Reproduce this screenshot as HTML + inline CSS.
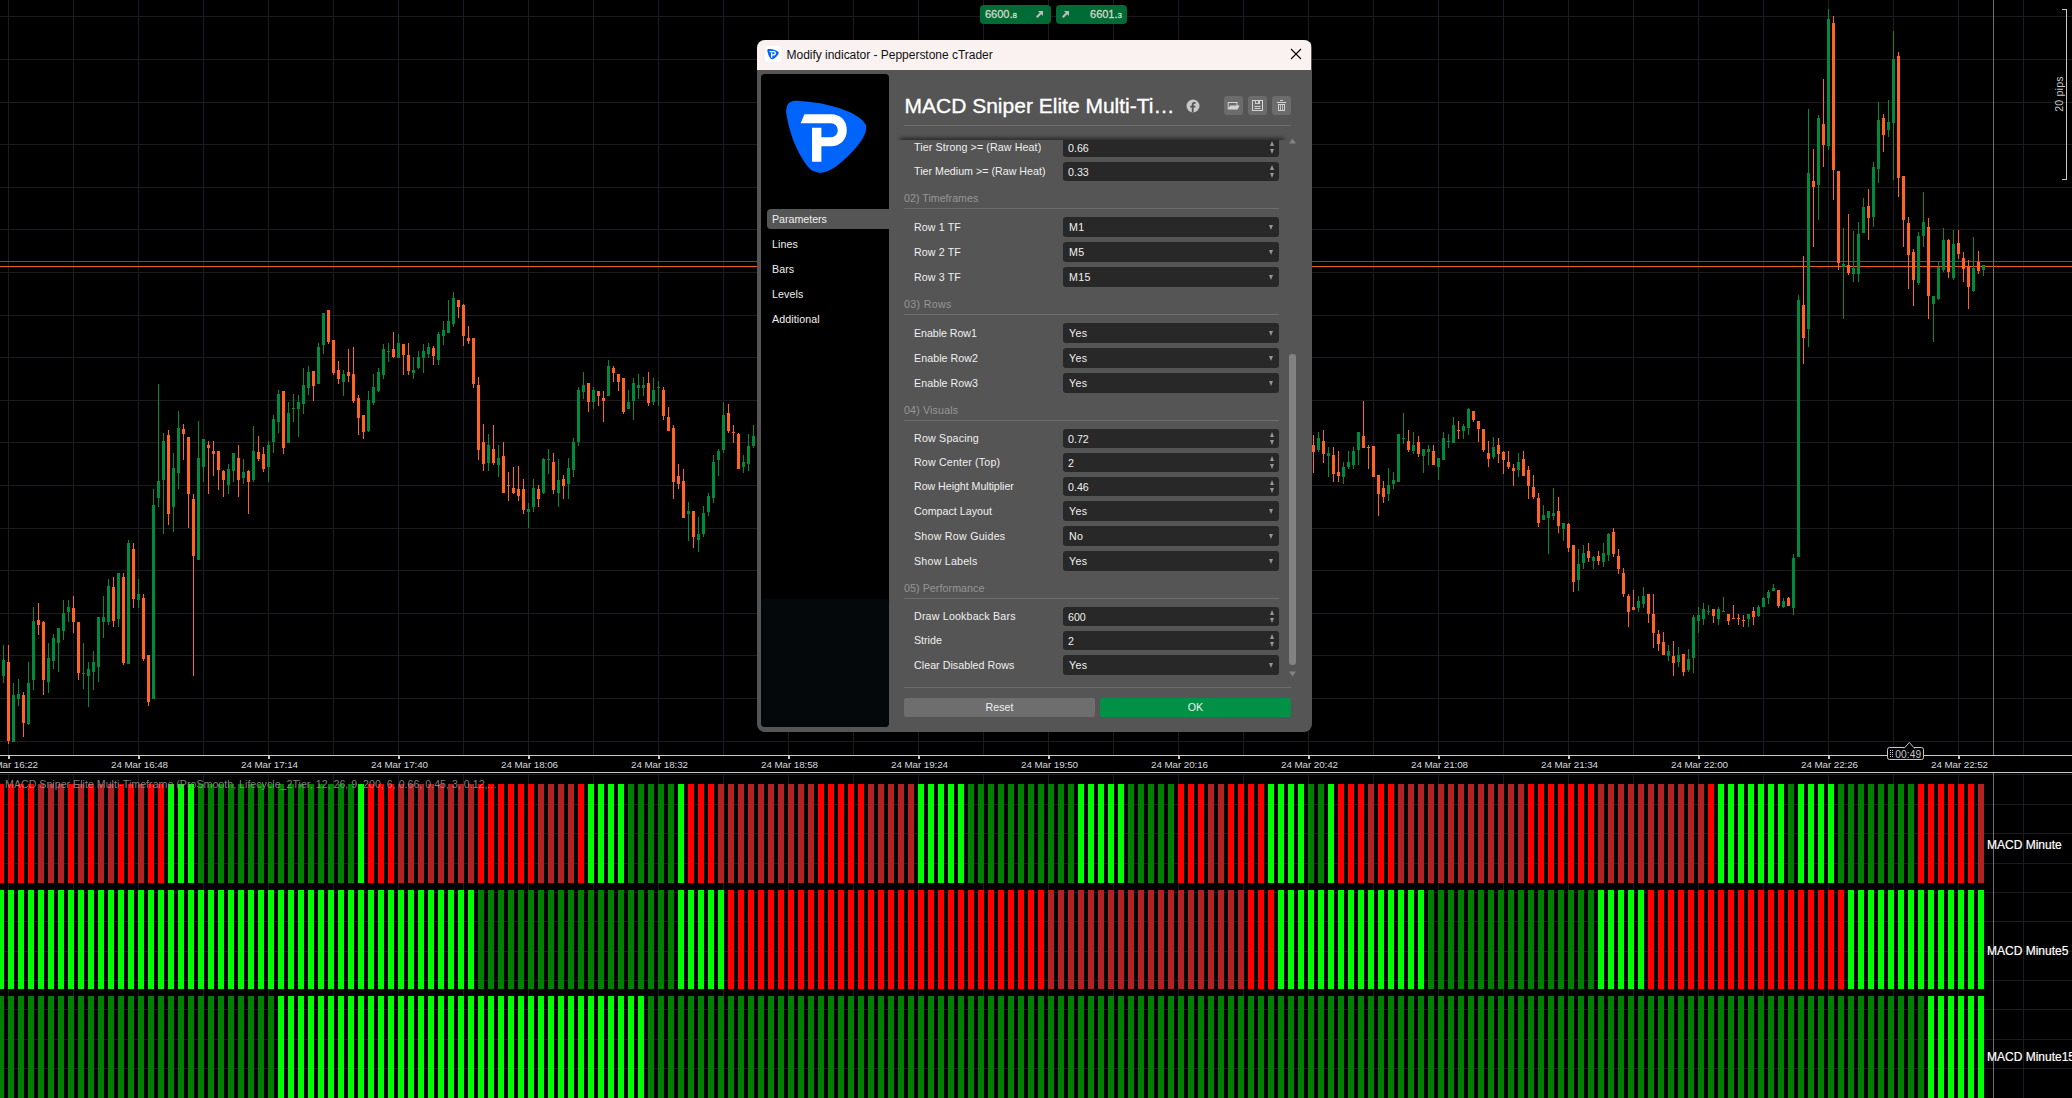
<!DOCTYPE html>
<html lang="en"><head><meta charset="utf-8"><title>Modify indicator - Pepperstone cTrader</title>
<style>
html,body{margin:0;padding:0;background:#000}
body{width:2072px;height:1098px;position:relative;overflow:hidden;font-family:"Liberation Sans",sans-serif;color:#f0f0f0}
.chart{position:absolute;left:0;top:0;display:block}
.tl{position:absolute;top:758px;width:80px;text-align:center;font-size:9.9px;letter-spacing:-.11px;line-height:13px;color:#d2d8de;white-space:nowrap}
.indt{position:absolute;left:5px;top:778px;font-size:10.67px;line-height:13px;color:rgba(150,150,150,.85);white-space:nowrap}
.rl{position:absolute;left:1987px;font-size:12px;line-height:14px;color:#fff;white-space:nowrap;-webkit-text-stroke:.2px #fff}
.pips{position:absolute;left:2009px;top:88px;width:100px;height:12px;line-height:12px;text-align:center;font-size:10.67px;color:#c8c8c8;transform:rotate(-90deg);white-space:nowrap;letter-spacing:.15px}
.qb{position:absolute;top:5px;height:19px;width:71px;background:#006b35;border-radius:4px;color:#d6d6c4;font-size:11px;line-height:19px;-webkit-text-stroke:.3px #d6d6c4}
.qb small{font-size:8px}
.tbox{position:absolute;left:1887px;top:747px;width:35px;height:11px;border:1px solid #c8c8c8;border-radius:2.5px;background:#000;font-size:10.2px;line-height:11px;color:#c3c9cf;white-space:nowrap}
.dlg{position:absolute;left:757px;top:40px;width:555px;height:692px;background:#555;border-radius:8px;overflow:hidden}
.tb{position:absolute;left:0;top:0;width:554px;height:30px;background:#faf1f1;color:#000}
.tbt{position:absolute;left:29.5px;top:7px;font-size:12px;letter-spacing:-.02px;line-height:16px;white-space:nowrap;color:#111}
.side{position:absolute;left:4px;top:34px;width:128px;height:653px;background:#000;border-radius:4px;overflow:hidden}
.side2{position:absolute;left:0;top:525px;width:128px;height:128px;background:#04080a;border-radius:4px}
.mi{position:absolute;left:11px;letter-spacing:.08px;font-size:10.67px;line-height:13px;white-space:nowrap}
.sel{position:absolute;left:6px;top:135px;width:122px;height:20px;background:#555;border-radius:4px 0 0 4px}
.hd{position:absolute;left:147.5px;top:53px;font-size:21px;line-height:26px;white-space:nowrap;color:#fff;-webkit-text-stroke:.35px #fff}
.hl{position:absolute;left:147px;top:85px;width:387px;height:1px;background:#6e6e6e}
.ib{position:absolute;top:56px;width:19px;height:19px;background:#6c6c6c;border-radius:3px}
.lab{position:absolute;left:157px;font-size:10.67px;white-space:nowrap}
.inp{position:absolute;left:306px;width:216px;background:#282828;border-radius:3px;font-size:10.67px}
.v{position:absolute;left:5px;top:0}
.vd{left:6px;letter-spacing:.3px}
.up,.dn,.dd{position:absolute;width:0;height:0;border-left:2.7px solid transparent;border-right:2.7px solid transparent}
.up{left:206.8px;top:3px;border-bottom:5px solid #969696}
.dn{left:206.8px;top:11px;border-top:5px solid #969696}
.dd{left:205.8px;top:8px;border-top:5px solid #969696}
.sec{position:absolute;left:147px;font-size:10.67px;line-height:14px;color:#969696;white-space:nowrap}
.secl{position:absolute;left:147px;width:375px;height:1px;background:#6e6e6e}
.shadow{position:absolute;left:133px;top:88px;width:410px;height:12px;overflow:hidden}.shadow i{position:absolute;left:11px;top:12px;width:382px;height:6px;box-shadow:0 -1px 4px 1px rgba(0,0,0,.55)}
.sbt{position:absolute;left:532px;top:314px;width:7px;height:311px;background:#828282;border-radius:3px}
.btn{position:absolute;top:658px;height:19px;width:191px;border-radius:2px;text-align:center;font-size:10.67px;line-height:19px}
</style></head>
<body>
<svg class="chart" width="2072" height="1098" viewBox="0 0 2072 1098" shape-rendering="crispEdges"><path fill="#1b1b21" d="M8 0h1v755h-1zM8 774h1v324h-1zM73 0h1v755h-1zM73 774h1v324h-1zM138 0h1v755h-1zM138 774h1v324h-1zM203 0h1v755h-1zM203 774h1v324h-1zM268 0h1v755h-1zM268 774h1v324h-1zM333 0h1v755h-1zM333 774h1v324h-1zM398 0h1v755h-1zM398 774h1v324h-1zM463 0h1v755h-1zM463 774h1v324h-1zM528 0h1v755h-1zM528 774h1v324h-1zM593 0h1v755h-1zM593 774h1v324h-1zM658 0h1v755h-1zM658 774h1v324h-1zM723 0h1v755h-1zM723 774h1v324h-1zM788 0h1v755h-1zM788 774h1v324h-1zM853 0h1v755h-1zM853 774h1v324h-1zM918 0h1v755h-1zM918 774h1v324h-1zM983 0h1v755h-1zM983 774h1v324h-1zM1048 0h1v755h-1zM1048 774h1v324h-1zM1113 0h1v755h-1zM1113 774h1v324h-1zM1178 0h1v755h-1zM1178 774h1v324h-1zM1243 0h1v755h-1zM1243 774h1v324h-1zM1308 0h1v755h-1zM1308 774h1v324h-1zM1373 0h1v755h-1zM1373 774h1v324h-1zM1438 0h1v755h-1zM1438 774h1v324h-1zM1503 0h1v755h-1zM1503 774h1v324h-1zM1568 0h1v755h-1zM1568 774h1v324h-1zM1633 0h1v755h-1zM1633 774h1v324h-1zM1698 0h1v755h-1zM1698 774h1v324h-1zM1763 0h1v755h-1zM1763 774h1v324h-1zM1828 0h1v755h-1zM1828 774h1v324h-1zM1893 0h1v755h-1zM1893 774h1v324h-1zM1958 0h1v755h-1zM1958 774h1v324h-1zM2023 0h1v755h-1zM2023 774h1v324h-1zM0 16h2072v1h-2072zM0 59h2072v1h-2072zM0 102h2072v1h-2072zM0 144h2072v1h-2072zM0 187h2072v1h-2072zM0 229h2072v1h-2072zM0 272h2072v1h-2072zM0 315h2072v1h-2072zM0 357h2072v1h-2072zM0 400h2072v1h-2072zM0 442h2072v1h-2072zM0 485h2072v1h-2072zM0 528h2072v1h-2072zM0 570h2072v1h-2072zM0 613h2072v1h-2072zM0 655h2072v1h-2072zM0 698h2072v1h-2072zM0 741h2072v1h-2072zM0 774h2072v1h-2072zM0 804h2072v1h-2072zM0 833h2072v1h-2072zM0 863h2072v1h-2072zM0 892h2072v1h-2072zM0 921h2072v1h-2072zM0 951h2072v1h-2072zM0 980h2072v1h-2072zM0 1009h2072v1h-2072zM0 1039h2072v1h-2072zM0 1068h2072v1h-2072z"/><rect x="0" y="261" width="2072" height="1" fill="#00823c"/><rect x="0" y="266" width="2072" height="1" fill="#ea5b24"/><rect x="1993" y="0" width="1" height="755" fill="#6e6e6e"/><rect x="1993" y="773" width="1" height="325" fill="#6e6e6e"/><path fill="#008a3c" d="M2 660h3v16h-3zM3 645h1v15h-1zM3 676h1v7h-1zM12 695h3v47h-3zM13 683h1v12h-1zM17 694h3v5h-3zM18 679h1v15h-1zM18 699h1v7h-1zM27 683h3v41h-3zM28 662h1v21h-1zM28 724h1v1h-1zM32 621h3v59h-3zM33 607h1v14h-1zM33 680h1v10h-1zM47 658h3v24h-3zM48 643h1v15h-1zM48 682h1v11h-1zM52 638h3v23h-3zM53 634h1v4h-1zM53 661h1v8h-1zM57 628h3v15h-3zM58 643h1v29h-1zM62 613h3v18h-3zM63 600h1v13h-1zM63 631h1v9h-1zM67 607h3v5h-3zM68 600h1v7h-1zM68 612h1v10h-1zM82 673h3v1h-3zM83 643h1v30h-1zM83 674h1v15h-1zM87 669h3v7h-3zM88 662h1v7h-1zM88 676h1v31h-1zM92 662h3v10h-3zM93 651h1v11h-1zM93 672h1v18h-1zM97 617h3v50h-3zM98 667h1v15h-1zM102 617h3v5h-3zM103 596h1v21h-1zM103 622h1v16h-1zM107 586h3v36h-3zM108 579h1v7h-1zM108 622h1v3h-1zM117 573h3v46h-3zM118 619h1v8h-1zM127 543h3v121h-3zM128 540h1v3h-1zM137 594h3v6h-3zM138 579h1v15h-1zM138 600h1v8h-1zM152 505h3v194h-3zM153 489h1v16h-1zM157 481h3v17h-3zM158 384h1v97h-1zM158 498h1v9h-1zM162 441h3v39h-3zM163 433h1v8h-1zM163 480h1v54h-1zM172 468h3v39h-3zM173 453h1v15h-1zM173 507h1v25h-1zM177 428h3v45h-3zM178 411h1v17h-1zM178 473h1v16h-1zM197 458h3v102h-3zM198 421h1v37h-1zM202 439h3v28h-3zM203 467h1v15h-1zM227 469h3v16h-3zM228 464h1v5h-1zM228 485h1v9h-1zM232 453h3v18h-3zM233 471h1v11h-1zM242 472h3v6h-3zM243 459h1v13h-1zM243 478h1v6h-1zM252 451h3v29h-3zM253 426h1v25h-1zM253 480h1v2h-1zM267 445h3v22h-3zM268 441h1v4h-1zM268 467h1v15h-1zM272 419h3v23h-3zM273 415h1v4h-1zM273 442h1v11h-1zM277 394h3v28h-3zM278 390h1v4h-1zM278 422h1v11h-1zM287 413h3v30h-3zM288 402h1v11h-1zM292 408h3v1h-3zM293 394h1v14h-1zM293 409h1v13h-1zM297 402h3v7h-3zM298 395h1v7h-1zM298 409h1v28h-1zM302 385h3v19h-3zM303 368h1v17h-1zM303 404h1v10h-1zM307 372h3v16h-3zM308 366h1v6h-1zM308 388h1v7h-1zM317 347h3v37h-3zM318 343h1v4h-1zM322 313h3v32h-3zM323 345h1v9h-1zM342 374h3v8h-3zM343 370h1v4h-1zM343 382h1v14h-1zM367 400h3v31h-3zM368 391h1v9h-1zM368 431h1v1h-1zM372 387h3v16h-3zM373 374h1v13h-1zM373 403h1v2h-1zM377 372h3v19h-3zM378 368h1v4h-1zM378 391h1v1h-1zM382 349h3v26h-3zM383 344h1v5h-1zM383 375h1v4h-1zM387 351h3v1h-3zM388 343h1v8h-1zM388 352h1v10h-1zM397 343h3v15h-3zM398 334h1v9h-1zM412 370h3v3h-3zM413 357h1v13h-1zM413 373h1v6h-1zM417 357h3v11h-3zM418 351h1v6h-1zM418 368h1v1h-1zM422 351h3v7h-3zM423 344h1v7h-1zM423 358h1v15h-1zM427 347h3v7h-3zM428 343h1v4h-1zM428 354h1v4h-1zM437 334h3v26h-3zM438 332h1v2h-1zM438 360h1v5h-1zM442 330h3v6h-3zM443 321h1v9h-1zM443 336h1v9h-1zM447 321h3v12h-3zM448 300h1v21h-1zM452 298h3v26h-3zM453 292h1v6h-1zM453 324h1v3h-1zM487 445h3v18h-3zM488 434h1v11h-1zM488 463h1v8h-1zM497 458h3v7h-3zM498 445h1v13h-1zM498 465h1v12h-1zM527 509h3v3h-3zM528 503h1v6h-1zM528 512h1v16h-1zM532 488h3v19h-3zM533 479h1v9h-1zM533 507h1v5h-1zM542 459h3v34h-3zM543 458h1v1h-1zM543 493h1v1h-1zM547 459h3v1h-3zM548 449h1v10h-1zM548 460h1v14h-1zM557 480h3v13h-3zM558 459h1v21h-1zM558 493h1v14h-1zM567 468h3v16h-3zM568 458h1v10h-1zM568 484h1v15h-1zM572 442h3v28h-3zM573 438h1v4h-1zM573 470h1v7h-1zM577 390h3v52h-3zM578 387h1v3h-1zM578 442h1v4h-1zM582 385h3v7h-3zM583 372h1v13h-1zM583 392h1v7h-1zM592 390h3v12h-3zM593 387h1v3h-1zM593 402h1v7h-1zM607 366h3v30h-3zM608 360h1v6h-1zM627 402h3v7h-3zM628 390h1v12h-1zM632 383h3v18h-3zM633 378h1v5h-1zM633 401h1v19h-1zM637 385h3v3h-3zM638 374h1v11h-1zM638 388h1v11h-1zM642 385h3v3h-3zM643 377h1v8h-1zM643 388h1v8h-1zM652 390h3v12h-3zM653 378h1v12h-1zM653 402h1v3h-1zM657 387h3v1h-3zM658 381h1v6h-1zM658 388h1v18h-1zM687 511h3v3h-3zM688 502h1v9h-1zM688 514h1v27h-1zM697 534h3v6h-3zM698 517h1v17h-1zM698 540h1v12h-1zM702 513h3v21h-3zM703 506h1v7h-1zM703 534h1v3h-1zM707 496h3v16h-3zM708 493h1v3h-1zM708 512h1v4h-1zM712 462h3v36h-3zM713 455h1v7h-1zM713 498h1v5h-1zM717 451h3v9h-3zM718 449h1v2h-1zM718 460h1v16h-1zM722 415h3v35h-3zM723 402h1v13h-1zM723 450h1v3h-1zM742 462h3v5h-3zM743 455h1v7h-1zM743 467h1v6h-1zM747 446h3v18h-3zM748 434h1v12h-1zM748 464h1v7h-1zM752 436h3v10h-3zM753 425h1v11h-1zM753 446h1v2h-1zM1317 438h3v12h-3zM1318 432h1v6h-1zM1318 450h1v2h-1zM1327 453h3v3h-3zM1328 447h1v6h-1zM1328 456h1v21h-1zM1342 467h3v10h-3zM1343 462h1v5h-1zM1343 477h1v7h-1zM1347 462h3v5h-3zM1348 451h1v11h-1zM1348 467h1v2h-1zM1352 451h3v14h-3zM1353 447h1v4h-1zM1353 465h1v4h-1zM1357 432h3v18h-3zM1358 450h1v15h-1zM1387 485h3v9h-3zM1388 468h1v17h-1zM1388 494h1v7h-1zM1392 480h3v4h-3zM1393 472h1v8h-1zM1393 484h1v5h-1zM1397 434h3v48h-3zM1402 438h3v1h-3zM1403 413h1v25h-1zM1403 439h1v5h-1zM1412 445h3v6h-3zM1413 432h1v13h-1zM1413 451h1v3h-1zM1422 449h3v7h-3zM1423 456h1v17h-1zM1427 449h3v3h-3zM1428 445h1v4h-1zM1428 452h1v13h-1zM1437 458h3v9h-3zM1438 467h1v13h-1zM1442 438h3v22h-3zM1443 432h1v6h-1zM1447 441h3v1h-3zM1448 434h1v7h-1zM1448 442h1v6h-1zM1452 425h3v18h-3zM1453 417h1v8h-1zM1462 426h3v5h-3zM1463 424h1v2h-1zM1463 431h1v8h-1zM1467 409h3v19h-3zM1468 408h1v1h-1zM1468 428h1v7h-1zM1492 447h3v10h-3zM1493 437h1v10h-1zM1493 457h1v2h-1zM1517 462h3v8h-3zM1518 453h1v9h-1zM1518 470h1v7h-1zM1542 515h3v5h-3zM1543 505h1v10h-1zM1547 511h3v7h-3zM1548 518h1v36h-1zM1552 513h3v3h-3zM1553 488h1v25h-1zM1553 516h1v4h-1zM1562 523h3v6h-3zM1563 529h1v12h-1zM1577 564h3v16h-3zM1578 549h1v15h-1zM1578 580h1v11h-1zM1582 553h3v10h-3zM1583 545h1v8h-1zM1583 563h1v6h-1zM1592 557h3v4h-3zM1593 556h1v1h-1zM1593 561h1v8h-1zM1602 553h3v9h-3zM1603 543h1v10h-1zM1603 562h1v5h-1zM1607 534h3v21h-3zM1608 533h1v1h-1zM1608 555h1v6h-1zM1637 601h3v7h-3zM1638 596h1v5h-1zM1638 608h1v4h-1zM1642 596h3v8h-3zM1643 587h1v9h-1zM1643 604h1v4h-1zM1667 651h3v5h-3zM1668 645h1v6h-1zM1668 656h1v5h-1zM1677 655h3v7h-3zM1678 647h1v8h-1zM1678 662h1v5h-1zM1687 659h3v11h-3zM1688 649h1v10h-1zM1688 670h1v2h-1zM1692 617h3v41h-3zM1693 615h1v2h-1zM1693 658h1v15h-1zM1697 615h3v6h-3zM1698 607h1v8h-1zM1698 621h1v12h-1zM1702 609h3v10h-3zM1703 603h1v6h-1zM1703 619h1v6h-1zM1707 611h3v1h-3zM1708 605h1v6h-1zM1708 612h1v3h-1zM1717 609h3v10h-3zM1718 607h1v2h-1zM1718 619h1v6h-1zM1722 611h3v1h-3zM1723 597h1v14h-1zM1747 614h3v5h-3zM1748 619h1v8h-1zM1757 607h3v9h-3zM1758 605h1v2h-1zM1758 616h1v1h-1zM1762 598h3v9h-3zM1763 597h1v1h-1zM1767 592h3v6h-3zM1768 590h1v2h-1zM1768 598h1v6h-1zM1772 588h3v3h-3zM1773 584h1v4h-1zM1782 601h3v6h-3zM1783 598h1v3h-1zM1783 607h1v1h-1zM1792 558h3v50h-3zM1793 554h1v4h-1zM1793 608h1v7h-1zM1797 300h3v257h-3zM1798 295h1v5h-1zM1807 173h3v156h-3zM1808 109h1v64h-1zM1808 329h1v18h-1zM1817 118h3v67h-3zM1818 115h1v3h-1zM1818 185h1v35h-1zM1827 19h3v127h-3zM1828 9h1v10h-1zM1828 146h1v4h-1zM1842 264h3v3h-3zM1843 228h1v36h-1zM1843 267h1v52h-1zM1852 268h3v6h-3zM1853 231h1v37h-1zM1853 274h1v8h-1zM1857 234h3v40h-3zM1858 222h1v12h-1zM1858 274h1v8h-1zM1862 207h3v26h-3zM1863 198h1v9h-1zM1872 167h3v50h-3zM1873 162h1v5h-1zM1873 217h1v10h-1zM1877 120h3v49h-3zM1878 102h1v18h-1zM1878 169h1v14h-1zM1887 122h3v8h-3zM1888 100h1v22h-1zM1888 130h1v7h-1zM1892 59h3v64h-3zM1893 31h1v28h-1zM1893 123h1v57h-1zM1917 236h3v47h-3zM1918 232h1v4h-1zM1918 283h1v2h-1zM1922 222h3v14h-3zM1923 192h1v30h-1zM1923 236h1v11h-1zM1932 296h3v8h-3zM1933 304h1v38h-1zM1937 267h3v32h-3zM1938 262h1v5h-1zM1938 299h1v1h-1zM1942 240h3v30h-3zM1943 228h1v12h-1zM1943 270h1v2h-1zM1952 244h3v34h-3zM1953 230h1v14h-1zM1953 278h1v2h-1zM1972 268h3v23h-3zM1973 237h1v31h-1zM1973 291h1v1h-1zM1982 265h3v5h-3zM1983 270h1v6h-1z"/><path fill="#ff6423" d="M7 662h3v79h-3zM8 645h1v17h-1zM8 741h1v3h-1zM22 695h3v28h-3zM23 692h1v3h-1zM23 723h1v14h-1zM37 620h3v5h-3zM38 603h1v17h-1zM38 625h1v10h-1zM42 622h3v58h-3zM43 621h1v1h-1zM43 680h1v15h-1zM72 608h3v14h-3zM73 596h1v12h-1zM73 622h1v11h-1zM77 622h3v51h-3zM78 673h1v7h-1zM112 587h3v34h-3zM113 577h1v10h-1zM113 621h1v6h-1zM122 577h3v86h-3zM123 573h1v4h-1zM123 663h1v2h-1zM132 549h3v50h-3zM133 543h1v6h-1zM133 599h1v9h-1zM142 598h3v61h-3zM143 594h1v4h-1zM143 659h1v2h-1zM147 655h3v47h-3zM148 702h1v4h-1zM167 435h3v79h-3zM168 430h1v5h-1zM168 514h1v11h-1zM182 429h3v5h-3zM183 424h1v5h-1zM183 434h1v26h-1zM187 437h3v57h-3zM188 494h1v34h-1zM192 499h3v57h-3zM193 494h1v5h-1zM193 556h1v120h-1zM207 445h3v3h-3zM208 441h1v4h-1zM208 448h1v46h-1zM212 451h3v3h-3zM213 441h1v10h-1zM213 454h1v22h-1zM217 451h3v19h-3zM218 470h1v20h-1zM222 471h3v9h-3zM223 470h1v1h-1zM223 480h1v17h-1zM237 458h3v22h-3zM238 445h1v13h-1zM238 480h1v17h-1zM247 471h3v11h-3zM248 470h1v1h-1zM248 482h1v32h-1zM257 452h3v7h-3zM258 436h1v16h-1zM258 459h1v2h-1zM262 454h3v15h-3zM263 447h1v7h-1zM263 469h1v3h-1zM282 391h3v57h-3zM283 448h1v6h-1zM312 371h3v15h-3zM313 386h1v15h-1zM327 310h3v32h-3zM328 342h1v2h-1zM332 340h3v33h-3zM333 373h1v2h-1zM337 370h3v9h-3zM338 361h1v9h-1zM338 379h1v5h-1zM347 372h3v4h-3zM348 349h1v23h-1zM348 376h1v6h-1zM352 374h3v27h-3zM353 347h1v27h-1zM353 401h1v2h-1zM357 398h3v20h-3zM358 395h1v3h-1zM358 418h1v17h-1zM362 415h3v17h-3zM363 432h1v7h-1zM392 349h3v8h-3zM393 332h1v17h-1zM393 357h1v1h-1zM402 344h3v11h-3zM403 355h1v20h-1zM407 355h3v16h-3zM408 343h1v12h-1zM408 371h1v4h-1zM432 348h3v8h-3zM433 346h1v2h-1zM433 356h1v9h-1zM457 300h3v7h-3zM458 307h1v11h-1zM462 305h3v31h-3zM463 304h1v1h-1zM463 336h1v10h-1zM467 338h3v3h-3zM468 326h1v12h-1zM468 341h1v3h-1zM472 338h3v46h-3zM473 384h1v4h-1zM477 385h3v65h-3zM478 377h1v8h-1zM478 450h1v10h-1zM482 442h3v22h-3zM483 424h1v18h-1zM483 464h1v7h-1zM492 449h3v14h-3zM493 425h1v24h-1zM493 463h1v2h-1zM502 456h3v37h-3zM503 442h1v14h-1zM507 485h3v1h-3zM508 472h1v13h-1zM508 486h1v15h-1zM512 488h3v5h-3zM513 467h1v21h-1zM513 493h1v1h-1zM517 489h3v7h-3zM518 466h1v23h-1zM518 496h1v5h-1zM522 489h3v21h-3zM523 479h1v10h-1zM523 510h1v4h-1zM537 489h3v10h-3zM538 485h1v4h-1zM538 499h1v8h-1zM552 462h3v28h-3zM553 453h1v9h-1zM553 490h1v4h-1zM562 479h3v7h-3zM563 475h1v4h-1zM563 486h1v13h-1zM587 383h3v19h-3zM588 402h1v10h-1zM597 391h3v5h-3zM598 396h1v10h-1zM602 398h3v3h-3zM603 391h1v7h-1zM603 401h1v21h-1zM612 368h3v5h-3zM613 366h1v2h-1zM613 373h1v9h-1zM617 374h3v8h-3zM618 382h1v9h-1zM622 378h3v34h-3zM623 412h1v2h-1zM647 383h3v20h-3zM648 372h1v11h-1zM648 403h1v3h-1zM662 390h3v26h-3zM663 387h1v3h-1zM663 416h1v4h-1zM667 417h3v14h-3zM668 407h1v10h-1zM672 428h3v54h-3zM673 425h1v3h-1zM673 482h1v17h-1zM677 476h3v8h-3zM678 464h1v12h-1zM678 484h1v5h-1zM682 481h3v37h-3zM683 469h1v12h-1zM692 511h3v26h-3zM693 537h1v11h-1zM727 413h3v18h-3zM728 404h1v9h-1zM728 431h1v2h-1zM732 432h3v1h-3zM733 425h1v7h-1zM733 433h1v10h-1zM737 434h3v35h-3zM738 433h1v1h-1zM1312 445h3v7h-3zM1313 435h1v10h-1zM1313 452h1v21h-1zM1322 441h3v13h-3zM1323 430h1v11h-1zM1323 454h1v9h-1zM1332 455h3v19h-3zM1333 447h1v8h-1zM1333 474h1v8h-1zM1337 472h3v4h-3zM1338 451h1v21h-1zM1338 476h1v6h-1zM1362 436h3v12h-3zM1363 401h1v35h-1zM1367 447h3v1h-3zM1368 445h1v2h-1zM1368 448h1v21h-1zM1372 446h3v31h-3zM1377 475h3v19h-3zM1378 494h1v22h-1zM1382 488h3v9h-3zM1383 481h1v7h-1zM1383 497h1v6h-1zM1407 441h3v9h-3zM1408 430h1v11h-1zM1408 450h1v2h-1zM1417 442h3v12h-3zM1418 436h1v6h-1zM1418 454h1v3h-1zM1432 451h3v14h-3zM1433 445h1v6h-1zM1457 430h3v1h-3zM1458 421h1v9h-1zM1458 431h1v8h-1zM1472 411h3v9h-3zM1473 420h1v2h-1zM1477 421h3v8h-3zM1478 429h1v13h-1zM1482 429h3v21h-3zM1483 450h1v2h-1zM1487 453h3v6h-3zM1488 441h1v12h-1zM1488 459h1v8h-1zM1497 445h3v9h-3zM1498 438h1v7h-1zM1498 454h1v9h-1zM1502 452h3v8h-3zM1503 451h1v1h-1zM1503 460h1v14h-1zM1507 462h3v5h-3zM1508 451h1v11h-1zM1508 467h1v2h-1zM1512 468h3v3h-3zM1513 464h1v4h-1zM1513 471h1v15h-1zM1522 459h3v17h-3zM1523 451h1v8h-1zM1527 470h3v16h-3zM1528 466h1v4h-1zM1528 486h1v13h-1zM1532 487h3v10h-3zM1533 475h1v12h-1zM1533 497h1v2h-1zM1537 498h3v25h-3zM1538 493h1v5h-1zM1538 523h1v4h-1zM1557 511h3v15h-3zM1558 497h1v14h-1zM1558 526h1v7h-1zM1567 524h3v24h-3zM1568 523h1v1h-1zM1568 548h1v4h-1zM1572 545h3v37h-3zM1573 582h1v10h-1zM1587 551h3v7h-3zM1588 543h1v8h-1zM1588 558h1v4h-1zM1597 556h3v5h-3zM1598 551h1v5h-1zM1598 561h1v4h-1zM1612 532h3v22h-3zM1613 528h1v4h-1zM1613 554h1v3h-1zM1617 556h3v13h-3zM1618 549h1v7h-1zM1618 569h1v5h-1zM1622 573h3v21h-3zM1623 568h1v5h-1zM1623 594h1v3h-1zM1627 596h3v16h-3zM1628 594h1v2h-1zM1628 612h1v15h-1zM1632 607h3v3h-3zM1633 590h1v17h-1zM1647 594h3v20h-3zM1648 614h1v9h-1zM1652 614h3v19h-3zM1653 594h1v20h-1zM1653 633h1v15h-1zM1657 634h3v10h-3zM1658 630h1v4h-1zM1658 644h1v7h-1zM1662 642h3v13h-3zM1663 632h1v10h-1zM1672 656h3v7h-3zM1673 641h1v15h-1zM1673 663h1v13h-1zM1682 654h3v18h-3zM1683 672h1v4h-1zM1712 609h3v7h-3zM1713 616h1v7h-1zM1727 614h3v7h-3zM1728 621h1v4h-1zM1732 618h3v1h-3zM1733 605h1v13h-1zM1737 618h3v1h-3zM1738 614h1v4h-1zM1738 619h1v6h-1zM1742 620h3v1h-3zM1743 615h1v5h-1zM1743 621h1v6h-1zM1752 611h3v6h-3zM1753 607h1v4h-1zM1753 617h1v8h-1zM1777 590h3v16h-3zM1778 606h1v2h-1zM1787 598h3v8h-3zM1788 597h1v1h-1zM1802 305h3v33h-3zM1803 256h1v49h-1zM1803 338h1v26h-1zM1812 181h3v6h-3zM1813 149h1v32h-1zM1813 187h1v60h-1zM1822 124h3v21h-3zM1823 79h1v45h-1zM1823 145h1v22h-1zM1832 23h3v147h-3zM1833 16h1v7h-1zM1833 170h1v30h-1zM1837 171h3v92h-3zM1838 263h1v7h-1zM1847 265h3v8h-3zM1848 214h1v51h-1zM1848 273h1v2h-1zM1867 206h3v12h-3zM1868 189h1v17h-1zM1868 218h1v22h-1zM1882 118h3v17h-3zM1883 114h1v4h-1zM1883 135h1v17h-1zM1897 56h3v122h-3zM1898 52h1v4h-1zM1898 178h1v19h-1zM1902 176h3v44h-3zM1903 220h1v27h-1zM1907 223h3v32h-3zM1908 217h1v6h-1zM1908 255h1v34h-1zM1912 252h3v28h-3zM1913 249h1v3h-1zM1913 280h1v26h-1zM1927 227h3v69h-3zM1928 218h1v9h-1zM1928 296h1v23h-1zM1947 240h3v32h-3zM1948 239h1v1h-1zM1948 272h1v6h-1zM1957 243h3v11h-3zM1958 230h1v13h-1zM1958 254h1v5h-1zM1962 258h3v11h-3zM1963 252h1v6h-1zM1963 269h1v13h-1zM1967 266h3v21h-3zM1968 260h1v6h-1zM1968 287h1v22h-1zM1977 262h3v9h-3zM1978 251h1v11h-1zM1978 271h1v3h-1z"/><rect x="0" y="755" width="2072" height="1" fill="#c8c8c8"/><rect x="0" y="772" width="2072" height="1" fill="#c8c8c8"/><path fill="#c8c8c8" d="M8 755h2v4h-2zM138 755h2v4h-2zM268 755h2v4h-2zM398 755h2v4h-2zM528 755h2v4h-2zM658 755h2v4h-2zM788 755h2v4h-2zM918 755h2v4h-2zM1048 755h2v4h-2zM1178 755h2v4h-2zM1308 755h2v4h-2zM1438 755h2v4h-2zM1568 755h2v4h-2zM1698 755h2v4h-2zM1828 755h2v4h-2zM1958 755h2v4h-2z"/><path fill="#ff0000" d="M-2 784h6v99h-6zM8 784h6v99h-6zM18 784h6v99h-6zM28 784h6v99h-6zM68 784h6v99h-6zM88 784h6v99h-6zM118 784h6v99h-6zM128 784h6v99h-6zM148 784h6v99h-6zM158 784h6v99h-6zM368 784h6v99h-6zM378 784h6v99h-6zM388 784h6v99h-6zM478 784h6v99h-6zM488 784h6v99h-6zM498 784h6v99h-6zM508 784h6v99h-6zM518 784h6v99h-6zM528 784h6v99h-6zM578 784h6v99h-6zM688 784h6v99h-6zM698 784h6v99h-6zM708 784h6v99h-6zM818 784h6v99h-6zM828 784h6v99h-6zM838 784h6v99h-6zM848 784h6v99h-6zM858 784h6v99h-6zM1178 784h6v99h-6zM1188 784h6v99h-6zM1198 784h6v99h-6zM1228 784h6v99h-6zM1238 784h6v99h-6zM1248 784h6v99h-6zM1258 784h6v99h-6zM1338 784h6v99h-6zM1348 784h6v99h-6zM1358 784h6v99h-6zM1378 784h6v99h-6zM1388 784h6v99h-6zM1528 784h6v99h-6zM1538 784h6v99h-6zM1548 784h6v99h-6zM1558 784h6v99h-6zM1568 784h6v99h-6zM1578 784h6v99h-6zM1588 784h6v99h-6zM1708 784h6v99h-6zM1918 784h6v99h-6zM1928 784h6v99h-6zM1938 784h6v99h-6zM1948 784h6v99h-6zM1958 784h6v99h-6zM1968 784h6v99h-6zM728 890h6v99h-6zM738 890h6v99h-6zM748 890h6v99h-6zM758 890h6v99h-6zM768 890h6v99h-6zM778 890h6v99h-6zM788 890h6v99h-6zM798 890h6v99h-6zM808 890h6v99h-6zM818 890h6v99h-6zM828 890h6v99h-6zM838 890h6v99h-6zM848 890h6v99h-6zM858 890h6v99h-6zM868 890h6v99h-6zM878 890h6v99h-6zM888 890h6v99h-6zM898 890h6v99h-6zM908 890h6v99h-6zM918 890h6v99h-6zM928 890h6v99h-6zM938 890h6v99h-6zM948 890h6v99h-6zM958 890h6v99h-6zM968 890h6v99h-6zM978 890h6v99h-6zM988 890h6v99h-6zM998 890h6v99h-6zM1008 890h6v99h-6zM1018 890h6v99h-6zM1028 890h6v99h-6zM1038 890h6v99h-6zM1248 890h6v99h-6zM1258 890h6v99h-6zM1268 890h6v99h-6zM1648 890h6v99h-6zM1658 890h6v99h-6zM1668 890h6v99h-6zM1678 890h6v99h-6zM1688 890h6v99h-6zM1698 890h6v99h-6zM1708 890h6v99h-6zM1718 890h6v99h-6zM1728 890h6v99h-6zM1738 890h6v99h-6zM1748 890h6v99h-6zM1758 890h6v99h-6zM1768 890h6v99h-6zM1778 890h6v99h-6zM1788 890h6v99h-6zM1798 890h6v99h-6zM1808 890h6v99h-6zM1818 890h6v99h-6zM1828 890h6v99h-6zM1838 890h6v99h-6z"/><path fill="#b22222" d="M38 784h6v99h-6zM48 784h6v99h-6zM58 784h6v99h-6zM78 784h6v99h-6zM98 784h6v99h-6zM108 784h6v99h-6zM138 784h6v99h-6zM398 784h6v99h-6zM408 784h6v99h-6zM418 784h6v99h-6zM428 784h6v99h-6zM438 784h6v99h-6zM448 784h6v99h-6zM458 784h6v99h-6zM468 784h6v99h-6zM538 784h6v99h-6zM548 784h6v99h-6zM558 784h6v99h-6zM568 784h6v99h-6zM718 784h6v99h-6zM728 784h6v99h-6zM738 784h6v99h-6zM748 784h6v99h-6zM758 784h6v99h-6zM768 784h6v99h-6zM778 784h6v99h-6zM788 784h6v99h-6zM798 784h6v99h-6zM808 784h6v99h-6zM868 784h6v99h-6zM878 784h6v99h-6zM888 784h6v99h-6zM898 784h6v99h-6zM908 784h6v99h-6zM1208 784h6v99h-6zM1218 784h6v99h-6zM1368 784h6v99h-6zM1398 784h6v99h-6zM1408 784h6v99h-6zM1418 784h6v99h-6zM1428 784h6v99h-6zM1438 784h6v99h-6zM1448 784h6v99h-6zM1458 784h6v99h-6zM1468 784h6v99h-6zM1478 784h6v99h-6zM1488 784h6v99h-6zM1498 784h6v99h-6zM1508 784h6v99h-6zM1518 784h6v99h-6zM1598 784h6v99h-6zM1608 784h6v99h-6zM1618 784h6v99h-6zM1628 784h6v99h-6zM1638 784h6v99h-6zM1648 784h6v99h-6zM1658 784h6v99h-6zM1668 784h6v99h-6zM1678 784h6v99h-6zM1688 784h6v99h-6zM1698 784h6v99h-6zM1978 784h6v99h-6zM1048 890h6v99h-6zM1058 890h6v99h-6zM1068 890h6v99h-6zM1078 890h6v99h-6zM1088 890h6v99h-6zM1098 890h6v99h-6zM1108 890h6v99h-6zM1118 890h6v99h-6zM1128 890h6v99h-6zM1138 890h6v99h-6zM1148 890h6v99h-6zM1158 890h6v99h-6zM1168 890h6v99h-6zM1178 890h6v99h-6zM1188 890h6v99h-6zM1198 890h6v99h-6zM1208 890h6v99h-6zM1218 890h6v99h-6zM1228 890h6v99h-6zM1238 890h6v99h-6z"/><path fill="#00ff00" d="M168 784h6v99h-6zM178 784h6v99h-6zM188 784h6v99h-6zM358 784h6v99h-6zM588 784h6v99h-6zM598 784h6v99h-6zM608 784h6v99h-6zM618 784h6v99h-6zM678 784h6v99h-6zM918 784h6v99h-6zM928 784h6v99h-6zM938 784h6v99h-6zM948 784h6v99h-6zM958 784h6v99h-6zM1078 784h6v99h-6zM1088 784h6v99h-6zM1098 784h6v99h-6zM1108 784h6v99h-6zM1118 784h6v99h-6zM1268 784h6v99h-6zM1278 784h6v99h-6zM1288 784h6v99h-6zM1298 784h6v99h-6zM1328 784h6v99h-6zM1718 784h6v99h-6zM1728 784h6v99h-6zM1738 784h6v99h-6zM1748 784h6v99h-6zM1758 784h6v99h-6zM1768 784h6v99h-6zM1778 784h6v99h-6zM1798 784h6v99h-6zM1808 784h6v99h-6zM1818 784h6v99h-6zM1828 784h6v99h-6zM-2 890h6v99h-6zM8 890h6v99h-6zM18 890h6v99h-6zM28 890h6v99h-6zM38 890h6v99h-6zM48 890h6v99h-6zM58 890h6v99h-6zM68 890h6v99h-6zM78 890h6v99h-6zM88 890h6v99h-6zM98 890h6v99h-6zM108 890h6v99h-6zM118 890h6v99h-6zM128 890h6v99h-6zM138 890h6v99h-6zM148 890h6v99h-6zM158 890h6v99h-6zM168 890h6v99h-6zM178 890h6v99h-6zM188 890h6v99h-6zM198 890h6v99h-6zM208 890h6v99h-6zM218 890h6v99h-6zM228 890h6v99h-6zM238 890h6v99h-6zM248 890h6v99h-6zM258 890h6v99h-6zM268 890h6v99h-6zM278 890h6v99h-6zM288 890h6v99h-6zM298 890h6v99h-6zM308 890h6v99h-6zM318 890h6v99h-6zM328 890h6v99h-6zM338 890h6v99h-6zM348 890h6v99h-6zM358 890h6v99h-6zM368 890h6v99h-6zM378 890h6v99h-6zM388 890h6v99h-6zM398 890h6v99h-6zM408 890h6v99h-6zM418 890h6v99h-6zM428 890h6v99h-6zM438 890h6v99h-6zM448 890h6v99h-6zM458 890h6v99h-6zM468 890h6v99h-6zM678 890h6v99h-6zM688 890h6v99h-6zM698 890h6v99h-6zM708 890h6v99h-6zM718 890h6v99h-6zM1278 890h6v99h-6zM1288 890h6v99h-6zM1298 890h6v99h-6zM1308 890h6v99h-6zM1318 890h6v99h-6zM1328 890h6v99h-6zM1338 890h6v99h-6zM1348 890h6v99h-6zM1358 890h6v99h-6zM1368 890h6v99h-6zM1378 890h6v99h-6zM1388 890h6v99h-6zM1398 890h6v99h-6zM1408 890h6v99h-6zM1418 890h6v99h-6zM1598 890h6v99h-6zM1608 890h6v99h-6zM1618 890h6v99h-6zM1628 890h6v99h-6zM1638 890h6v99h-6zM1848 890h6v99h-6zM1858 890h6v99h-6zM1868 890h6v99h-6zM1878 890h6v99h-6zM1888 890h6v99h-6zM1898 890h6v99h-6zM1908 890h6v99h-6zM1918 890h6v99h-6zM1928 890h6v99h-6zM1938 890h6v99h-6zM1948 890h6v99h-6zM1958 890h6v99h-6zM1968 890h6v99h-6zM1978 890h6v99h-6zM278 996h6v102h-6zM288 996h6v102h-6zM298 996h6v102h-6zM308 996h6v102h-6zM318 996h6v102h-6zM328 996h6v102h-6zM338 996h6v102h-6zM348 996h6v102h-6zM358 996h6v102h-6zM368 996h6v102h-6zM378 996h6v102h-6zM388 996h6v102h-6zM398 996h6v102h-6zM408 996h6v102h-6zM418 996h6v102h-6zM428 996h6v102h-6zM438 996h6v102h-6zM448 996h6v102h-6zM458 996h6v102h-6zM468 996h6v102h-6zM478 996h6v102h-6zM488 996h6v102h-6zM498 996h6v102h-6zM508 996h6v102h-6zM518 996h6v102h-6zM528 996h6v102h-6zM538 996h6v102h-6zM548 996h6v102h-6zM558 996h6v102h-6zM568 996h6v102h-6zM578 996h6v102h-6zM588 996h6v102h-6zM598 996h6v102h-6zM608 996h6v102h-6zM618 996h6v102h-6zM628 996h6v102h-6zM638 996h6v102h-6zM1928 996h6v102h-6zM1938 996h6v102h-6zM1948 996h6v102h-6zM1958 996h6v102h-6zM1968 996h6v102h-6zM1978 996h6v102h-6z"/><path fill="#008000" d="M198 784h6v99h-6zM208 784h6v99h-6zM218 784h6v99h-6zM228 784h6v99h-6zM238 784h6v99h-6zM248 784h6v99h-6zM258 784h6v99h-6zM268 784h6v99h-6zM278 784h6v99h-6zM288 784h6v99h-6zM298 784h6v99h-6zM308 784h6v99h-6zM318 784h6v99h-6zM328 784h6v99h-6zM338 784h6v99h-6zM348 784h6v99h-6zM628 784h6v99h-6zM638 784h6v99h-6zM648 784h6v99h-6zM658 784h6v99h-6zM668 784h6v99h-6zM968 784h6v99h-6zM978 784h6v99h-6zM988 784h6v99h-6zM998 784h6v99h-6zM1008 784h6v99h-6zM1018 784h6v99h-6zM1028 784h6v99h-6zM1038 784h6v99h-6zM1048 784h6v99h-6zM1058 784h6v99h-6zM1068 784h6v99h-6zM1128 784h6v99h-6zM1138 784h6v99h-6zM1148 784h6v99h-6zM1158 784h6v99h-6zM1168 784h6v99h-6zM1308 784h6v99h-6zM1318 784h6v99h-6zM1788 784h6v99h-6zM1838 784h6v99h-6zM1848 784h6v99h-6zM1858 784h6v99h-6zM1868 784h6v99h-6zM1878 784h6v99h-6zM1888 784h6v99h-6zM1898 784h6v99h-6zM1908 784h6v99h-6zM478 890h6v99h-6zM488 890h6v99h-6zM498 890h6v99h-6zM508 890h6v99h-6zM518 890h6v99h-6zM528 890h6v99h-6zM538 890h6v99h-6zM548 890h6v99h-6zM558 890h6v99h-6zM568 890h6v99h-6zM578 890h6v99h-6zM588 890h6v99h-6zM598 890h6v99h-6zM608 890h6v99h-6zM618 890h6v99h-6zM628 890h6v99h-6zM638 890h6v99h-6zM648 890h6v99h-6zM658 890h6v99h-6zM668 890h6v99h-6zM1428 890h6v99h-6zM1438 890h6v99h-6zM1448 890h6v99h-6zM1458 890h6v99h-6zM1468 890h6v99h-6zM1478 890h6v99h-6zM1488 890h6v99h-6zM1498 890h6v99h-6zM1508 890h6v99h-6zM1518 890h6v99h-6zM1528 890h6v99h-6zM1538 890h6v99h-6zM1548 890h6v99h-6zM1558 890h6v99h-6zM1568 890h6v99h-6zM1578 890h6v99h-6zM1588 890h6v99h-6zM-2 996h6v102h-6zM8 996h6v102h-6zM18 996h6v102h-6zM28 996h6v102h-6zM38 996h6v102h-6zM48 996h6v102h-6zM58 996h6v102h-6zM68 996h6v102h-6zM78 996h6v102h-6zM88 996h6v102h-6zM98 996h6v102h-6zM108 996h6v102h-6zM118 996h6v102h-6zM128 996h6v102h-6zM138 996h6v102h-6zM148 996h6v102h-6zM158 996h6v102h-6zM168 996h6v102h-6zM178 996h6v102h-6zM188 996h6v102h-6zM198 996h6v102h-6zM208 996h6v102h-6zM218 996h6v102h-6zM228 996h6v102h-6zM238 996h6v102h-6zM248 996h6v102h-6zM258 996h6v102h-6zM268 996h6v102h-6zM648 996h6v102h-6zM658 996h6v102h-6zM668 996h6v102h-6zM678 996h6v102h-6zM688 996h6v102h-6zM698 996h6v102h-6zM708 996h6v102h-6zM718 996h6v102h-6zM728 996h6v102h-6zM738 996h6v102h-6zM748 996h6v102h-6zM758 996h6v102h-6zM768 996h6v102h-6zM778 996h6v102h-6zM788 996h6v102h-6zM798 996h6v102h-6zM808 996h6v102h-6zM818 996h6v102h-6zM828 996h6v102h-6zM838 996h6v102h-6zM848 996h6v102h-6zM858 996h6v102h-6zM868 996h6v102h-6zM878 996h6v102h-6zM888 996h6v102h-6zM898 996h6v102h-6zM908 996h6v102h-6zM918 996h6v102h-6zM928 996h6v102h-6zM938 996h6v102h-6zM948 996h6v102h-6zM958 996h6v102h-6zM968 996h6v102h-6zM978 996h6v102h-6zM988 996h6v102h-6zM998 996h6v102h-6zM1008 996h6v102h-6zM1018 996h6v102h-6zM1028 996h6v102h-6zM1038 996h6v102h-6zM1048 996h6v102h-6zM1058 996h6v102h-6zM1068 996h6v102h-6zM1078 996h6v102h-6zM1088 996h6v102h-6zM1098 996h6v102h-6zM1108 996h6v102h-6zM1118 996h6v102h-6zM1128 996h6v102h-6zM1138 996h6v102h-6zM1148 996h6v102h-6zM1158 996h6v102h-6zM1168 996h6v102h-6zM1178 996h6v102h-6zM1188 996h6v102h-6zM1198 996h6v102h-6zM1208 996h6v102h-6zM1218 996h6v102h-6zM1228 996h6v102h-6zM1238 996h6v102h-6zM1248 996h6v102h-6zM1258 996h6v102h-6zM1268 996h6v102h-6zM1278 996h6v102h-6zM1288 996h6v102h-6zM1298 996h6v102h-6zM1308 996h6v102h-6zM1318 996h6v102h-6zM1328 996h6v102h-6zM1338 996h6v102h-6zM1348 996h6v102h-6zM1358 996h6v102h-6zM1368 996h6v102h-6zM1378 996h6v102h-6zM1388 996h6v102h-6zM1398 996h6v102h-6zM1408 996h6v102h-6zM1418 996h6v102h-6zM1428 996h6v102h-6zM1438 996h6v102h-6zM1448 996h6v102h-6zM1458 996h6v102h-6zM1468 996h6v102h-6zM1478 996h6v102h-6zM1488 996h6v102h-6zM1498 996h6v102h-6zM1508 996h6v102h-6zM1518 996h6v102h-6zM1528 996h6v102h-6zM1538 996h6v102h-6zM1548 996h6v102h-6zM1558 996h6v102h-6zM1568 996h6v102h-6zM1578 996h6v102h-6zM1588 996h6v102h-6zM1598 996h6v102h-6zM1608 996h6v102h-6zM1618 996h6v102h-6zM1628 996h6v102h-6zM1638 996h6v102h-6zM1648 996h6v102h-6zM1658 996h6v102h-6zM1668 996h6v102h-6zM1678 996h6v102h-6zM1688 996h6v102h-6zM1698 996h6v102h-6zM1708 996h6v102h-6zM1718 996h6v102h-6zM1728 996h6v102h-6zM1738 996h6v102h-6zM1748 996h6v102h-6zM1758 996h6v102h-6zM1768 996h6v102h-6zM1778 996h6v102h-6zM1788 996h6v102h-6zM1798 996h6v102h-6zM1808 996h6v102h-6zM1818 996h6v102h-6zM1828 996h6v102h-6zM1838 996h6v102h-6zM1848 996h6v102h-6zM1858 996h6v102h-6zM1868 996h6v102h-6zM1878 996h6v102h-6zM1888 996h6v102h-6zM1898 996h6v102h-6zM1908 996h6v102h-6zM1918 996h6v102h-6z"/><path fill="none" stroke="#c8c8c8" stroke-width="1" d="M2061.5 9.5H2066.5V179.5H2061.5"/></svg>
<div class="tl" style="left:-30.5px">24 Mar 16:22</div><div class="tl" style="left:99.5px">24 Mar 16:48</div><div class="tl" style="left:229.5px">24 Mar 17:14</div><div class="tl" style="left:359.5px">24 Mar 17:40</div><div class="tl" style="left:489.5px">24 Mar 18:06</div><div class="tl" style="left:619.5px">24 Mar 18:32</div><div class="tl" style="left:749.5px">24 Mar 18:58</div><div class="tl" style="left:879.5px">24 Mar 19:24</div><div class="tl" style="left:1009.5px">24 Mar 19:50</div><div class="tl" style="left:1139.5px">24 Mar 20:16</div><div class="tl" style="left:1269.5px">24 Mar 20:42</div><div class="tl" style="left:1399.5px">24 Mar 21:08</div><div class="tl" style="left:1529.5px">24 Mar 21:34</div><div class="tl" style="left:1659.5px">24 Mar 22:00</div><div class="tl" style="left:1789.5px">24 Mar 22:26</div><div class="tl" style="left:1919.5px">24 Mar 22:52</div>
<div class="indt">MACD Sniper Elite Multi-Timeframe (ProSmooth, Lifecycle_2Tier, 12, 26, 9, 200, 6, 0.66, 0.45, 3, 0.12,...</div>
<div class="rl" style="top:838px">MACD Minute</div>
<div class="rl" style="top:944px">MACD Minute5</div>
<div class="rl" style="top:1050px">MACD Minute15</div>
<div class="pips">20 pips</div>
<div class="qb" style="left:980px"><span style="position:absolute;left:5px">6600.<small>8</small></span><svg style="position:absolute;left:56px;top:6px" width="7" height="7" viewBox="0 0 7 7"><path fill="#bdbdbd" d="M2 0H7V5L5.3 3.3L1.5 7L0 5.5L3.7 1.7Z"/></svg></div>
<div class="qb" style="left:1056px"><svg style="position:absolute;left:6px;top:6px" width="7" height="7" viewBox="0 0 7 7"><path fill="#bdbdbd" d="M2 0H7V5L5.3 3.3L1.5 7L0 5.5L3.7 1.7Z"/></svg><span style="position:absolute;right:5px">6601.<small>3</small></span></div>
<div class="tbox"><svg style="position:absolute;left:2px;top:2px" width="4" height="8" viewBox="0 0 4 8" shape-rendering="crispEdges"><path fill="#d0d0d0" d="M0 0h1v1h-1zM2 0h1v1h-1zM0 2h1v1h-1zM2 2h1v1h-1zM0 4h1v1h-1zM2 4h1v1h-1zM0 6h1v1h-1zM2 6h1v1h-1z"/></svg><span style="position:absolute;left:7.2px;top:1px;letter-spacing:.1px">00:49</span></div>
<svg style="position:absolute;left:1903px;top:741px" width="13" height="8" viewBox="0 0 13 8"><path d="M1 7.5L6.3 1.4L11.6 7.5" fill="#000" stroke="#c8c8c8" stroke-width="1"/><rect x="1.6" y="6.6" width="9.4" height="1.4" fill="#000"/></svg>

<div class="dlg">
 <div class="tb">
  <svg style="position:absolute;left:8px;top:6px" width="16" height="16" viewBox="0 0 16 16"><rect width="16" height="16" rx="2.5" fill="#fff"/><g transform="translate(1.84 2.59) scale(0.1425)"><path fill="#0064fa" d="M3.20 12.10C3.47 10.18 4.02 7.20 5.20 5.70C6.38 4.20 8.40 3.57 10.30 3.10C12.20 2.63 12.35 2.57 16.60 2.90C20.85 3.23 29.42 3.95 35.80 5.10C42.18 6.25 49.38 8.10 54.90 9.80C60.42 11.50 65.08 13.43 68.90 15.30C72.72 17.17 75.57 19.20 77.80 21.00C80.03 22.80 81.40 24.62 82.30 26.10C83.20 27.58 83.30 28.20 83.20 29.90C83.10 31.60 82.82 33.75 81.70 36.30C80.58 38.85 79.07 41.80 76.50 45.20C73.93 48.60 69.90 53.08 66.30 56.70C62.70 60.32 58.28 64.25 54.90 66.90C51.52 69.55 48.77 71.28 46.00 72.60C43.23 73.92 40.65 74.65 38.30 74.80C35.95 74.95 33.82 74.18 31.90 73.50C29.98 72.82 28.92 72.87 26.80 70.70C24.68 68.53 21.75 64.75 19.20 60.50C16.65 56.25 13.63 50.30 11.50 45.20C9.37 40.10 7.72 34.57 6.40 29.90C5.08 25.23 4.13 20.17 3.60 17.20C3.07 14.23 2.93 14.02 3.20 12.10Z"/><path fill="#fff" d="M21.5 16.2H48C57.5 16.2 63.8 22.5 63.8 32C63.8 41.5 57.5 48.2 48 48.2H38.4V63.8H29V29.7H38.4V39.2H48C51.8 39.2 54.7 36.4 54.7 32.3C54.7 28.2 51.8 25.2 48 25.2H17.6Z"/></g></svg>
  <div class="tbt">Modify indicator - Pepperstone cTrader</div>
  <svg style="position:absolute;left:533px;top:8px" width="12" height="12" viewBox="0 0 12 12"><path d="M1 1L11 11M11 1L1 11" stroke="#000" stroke-width="1.1" fill="none"/></svg>
 </div>
 <div class="side">
  <svg style="position:absolute;left:22px;top:24px" width="88" height="80" viewBox="0 0 88 80"><path fill="#0064fa" d="M3.20 12.10C3.47 10.18 4.02 7.20 5.20 5.70C6.38 4.20 8.40 3.57 10.30 3.10C12.20 2.63 12.35 2.57 16.60 2.90C20.85 3.23 29.42 3.95 35.80 5.10C42.18 6.25 49.38 8.10 54.90 9.80C60.42 11.50 65.08 13.43 68.90 15.30C72.72 17.17 75.57 19.20 77.80 21.00C80.03 22.80 81.40 24.62 82.30 26.10C83.20 27.58 83.30 28.20 83.20 29.90C83.10 31.60 82.82 33.75 81.70 36.30C80.58 38.85 79.07 41.80 76.50 45.20C73.93 48.60 69.90 53.08 66.30 56.70C62.70 60.32 58.28 64.25 54.90 66.90C51.52 69.55 48.77 71.28 46.00 72.60C43.23 73.92 40.65 74.65 38.30 74.80C35.95 74.95 33.82 74.18 31.90 73.50C29.98 72.82 28.92 72.87 26.80 70.70C24.68 68.53 21.75 64.75 19.20 60.50C16.65 56.25 13.63 50.30 11.50 45.20C9.37 40.10 7.72 34.57 6.40 29.90C5.08 25.23 4.13 20.17 3.60 17.20C3.07 14.23 2.93 14.02 3.20 12.10Z"/><path fill="#fff" d="M21.5 16.2H48C57.5 16.2 63.8 22.5 63.8 32C63.8 41.5 57.5 48.2 48 48.2H38.4V63.8H29V29.7H38.4V39.2H48C51.8 39.2 54.7 36.4 54.7 32.3C54.7 28.2 51.8 25.2 48 25.2H17.6Z"/></svg>
  <div class="sel"></div>
  <div class="mi" style="top:139px;letter-spacing:-.02px">Parameters</div>
  <div class="mi" style="top:164px">Lines</div>
  <div class="mi" style="top:189px">Bars</div>
  <div class="mi" style="top:214px">Levels</div>
  <div class="mi" style="top:239px">Additional</div>
  <div class="side2"></div>
 </div>
 <div class="hd">MACD Sniper Elite Multi-Ti&#8230;</div>
 <svg style="position:absolute;left:429.2px;top:59.3px" width="14" height="14" viewBox="0 0 14 14"><circle cx="7" cy="7" r="6.5" fill="#c8c8c8"/><path fill="#555" d="M7.6 13.5V8.6H9.2L9.5 6.7H7.6V5.6C7.6 5 7.8 4.7 8.6 4.7H9.6V3C9.3 2.95 8.8 2.9 8.2 2.9C6.7 2.9 5.8 3.8 5.8 5.3V6.7H4.2V8.6H5.8V13.5Z"/></svg>
 <div class="ib" style="left:467px"><svg width="19" height="19" viewBox="0 0 19 19"><path fill="#d2d2d2" d="M3.7 6H13.5V9.5H12.5V7H4.7V12L6.2 9.5H15.7L13.5 13.4H3.7Z"/></svg></div>
 <div class="ib" style="left:491px"><svg width="19" height="19" viewBox="0 0 19 19"><path fill="#d2d2d2" fill-rule="evenodd" d="M4 4H15V15H4ZM5 5V14H14V5H12V8H7V5ZM8 5V7H10V5ZM6.5 10H12.5V11H6.5ZM6.5 12H12.5V13H6.5Z"/></svg></div>
 <div class="ib" style="left:515px"><svg width="19" height="19" viewBox="0 0 19 19"><path fill="#d2d2d2" fill-rule="evenodd" d="M8 4H11V5H8ZM5 6H14V7H5ZM6 8H13V15H6ZM7 9V14H8.2V9ZM9 9V14H10V9ZM10.8 9V14H12V9Z"/></svg></div>
 <div class="hl"></div>
 <div class="lab" style="top:98px;height:19px;line-height:19px;letter-spacing:0.109px">Tier Strong &gt;= (Raw Heat)</div><div class="inp" style="top:100px;height:17px;line-height:20px;border-radius:0 0 3px 3px"><span class="v" style="top:-2px">0.66</span><i class="up" style="top:1px"></i><i class="dn" style="top:9px"></i></div><div class="lab" style="top:122px;height:19px;line-height:19px;letter-spacing:0.017px">Tier Medium &gt;= (Raw Heat)</div><div class="inp" style="top:122px;height:19px;line-height:20px"><span class="v">0.33</span><i class="up"></i><i class="dn"></i></div><div class="lab" style="top:177px;height:20px;line-height:20px;letter-spacing:0.125px">Row 1 TF</div><div class="inp" style="top:177px;height:20px;line-height:20px"><span class="v vd">M1</span><i class="dd"></i></div><div class="lab" style="top:202px;height:20px;line-height:20px;letter-spacing:0.125px">Row 2 TF</div><div class="inp" style="top:202px;height:20px;line-height:20px"><span class="v vd">M5</span><i class="dd"></i></div><div class="lab" style="top:227px;height:20px;line-height:20px;letter-spacing:0.125px">Row 3 TF</div><div class="inp" style="top:227px;height:20px;line-height:20px"><span class="v vd">M15</span><i class="dd"></i></div><div class="lab" style="top:283px;height:20px;line-height:20px;letter-spacing:-0.054px">Enable Row1</div><div class="inp" style="top:283px;height:20px;line-height:20px"><span class="v vd">Yes</span><i class="dd"></i></div><div class="lab" style="top:308px;height:20px;line-height:20px;letter-spacing:0.065px">Enable Row2</div><div class="inp" style="top:308px;height:20px;line-height:20px"><span class="v vd">Yes</span><i class="dd"></i></div><div class="lab" style="top:333px;height:20px;line-height:20px;letter-spacing:0.065px">Enable Row3</div><div class="inp" style="top:333px;height:20px;line-height:20px"><span class="v vd">Yes</span><i class="dd"></i></div><div class="lab" style="top:389px;height:19px;line-height:19px;letter-spacing:0.200px">Row Spacing</div><div class="inp" style="top:389px;height:19px;line-height:20px"><span class="v">0.72</span><i class="up"></i><i class="dn"></i></div><div class="lab" style="top:413px;height:19px;line-height:19px;letter-spacing:0.169px">Row Center (Top)</div><div class="inp" style="top:413px;height:19px;line-height:20px"><span class="v">2</span><i class="up"></i><i class="dn"></i></div><div class="lab" style="top:437px;height:19px;line-height:19px;letter-spacing:-0.042px">Row Height Multiplier</div><div class="inp" style="top:437px;height:19px;line-height:20px"><span class="v">0.46</span><i class="up"></i><i class="dn"></i></div><div class="lab" style="top:461px;height:20px;line-height:20px;letter-spacing:0.029px">Compact Layout</div><div class="inp" style="top:461px;height:20px;line-height:20px"><span class="v vd">Yes</span><i class="dd"></i></div><div class="lab" style="top:486px;height:20px;line-height:20px;letter-spacing:0.249px">Show Row Guides</div><div class="inp" style="top:486px;height:20px;line-height:20px"><span class="v vd">No</span><i class="dd"></i></div><div class="lab" style="top:511px;height:20px;line-height:20px;letter-spacing:0.225px">Show Labels</div><div class="inp" style="top:511px;height:20px;line-height:20px"><span class="v vd">Yes</span><i class="dd"></i></div><div class="lab" style="top:567px;height:19px;line-height:19px;letter-spacing:0.187px">Draw Lookback Bars</div><div class="inp" style="top:567px;height:19px;line-height:20px"><span class="v">600</span><i class="up"></i><i class="dn"></i></div><div class="lab" style="top:591px;height:19px;line-height:19px;letter-spacing:-0.007px">Stride</div><div class="inp" style="top:591px;height:19px;line-height:20px"><span class="v">2</span><i class="up"></i><i class="dn"></i></div><div class="lab" style="top:615px;height:20px;line-height:20px;letter-spacing:0.047px">Clear Disabled Rows</div><div class="inp" style="top:615px;height:20px;line-height:20px"><span class="v vd">Yes</span><i class="dd"></i></div><div class="sec" style="top:151px;letter-spacing:0.019px">02) Timeframes</div><div class="secl" style="top:168px"></div><div class="sec" style="top:257px;letter-spacing:0.325px">03) Rows</div><div class="secl" style="top:274px"></div><div class="sec" style="top:363px;letter-spacing:0.161px">04) Visuals</div><div class="secl" style="top:380px"></div><div class="sec" style="top:541px;letter-spacing:0.075px">05) Performance</div><div class="secl" style="top:558px"></div>
 <div class="shadow"><i></i></div>
 <svg style="position:absolute;left:531px;top:98px" width="9" height="6" viewBox="0 0 9 6"><path fill="#828282" d="M4.5 0.5L8 5.5H1Z"/></svg>
 <div class="sbt"></div>
 <svg style="position:absolute;left:531px;top:631px" width="9" height="6" viewBox="0 0 9 6"><path fill="#828282" d="M4.5 5.5L8 0.5H1Z"/></svg>
 <div class="secl" style="top:647px;width:387px"></div>
 <div class="btn" style="left:147px;background:#6e6e6e">Reset</div>
 <div class="btn" style="left:343px;background:#009146">OK</div>
</div>
</body></html>
